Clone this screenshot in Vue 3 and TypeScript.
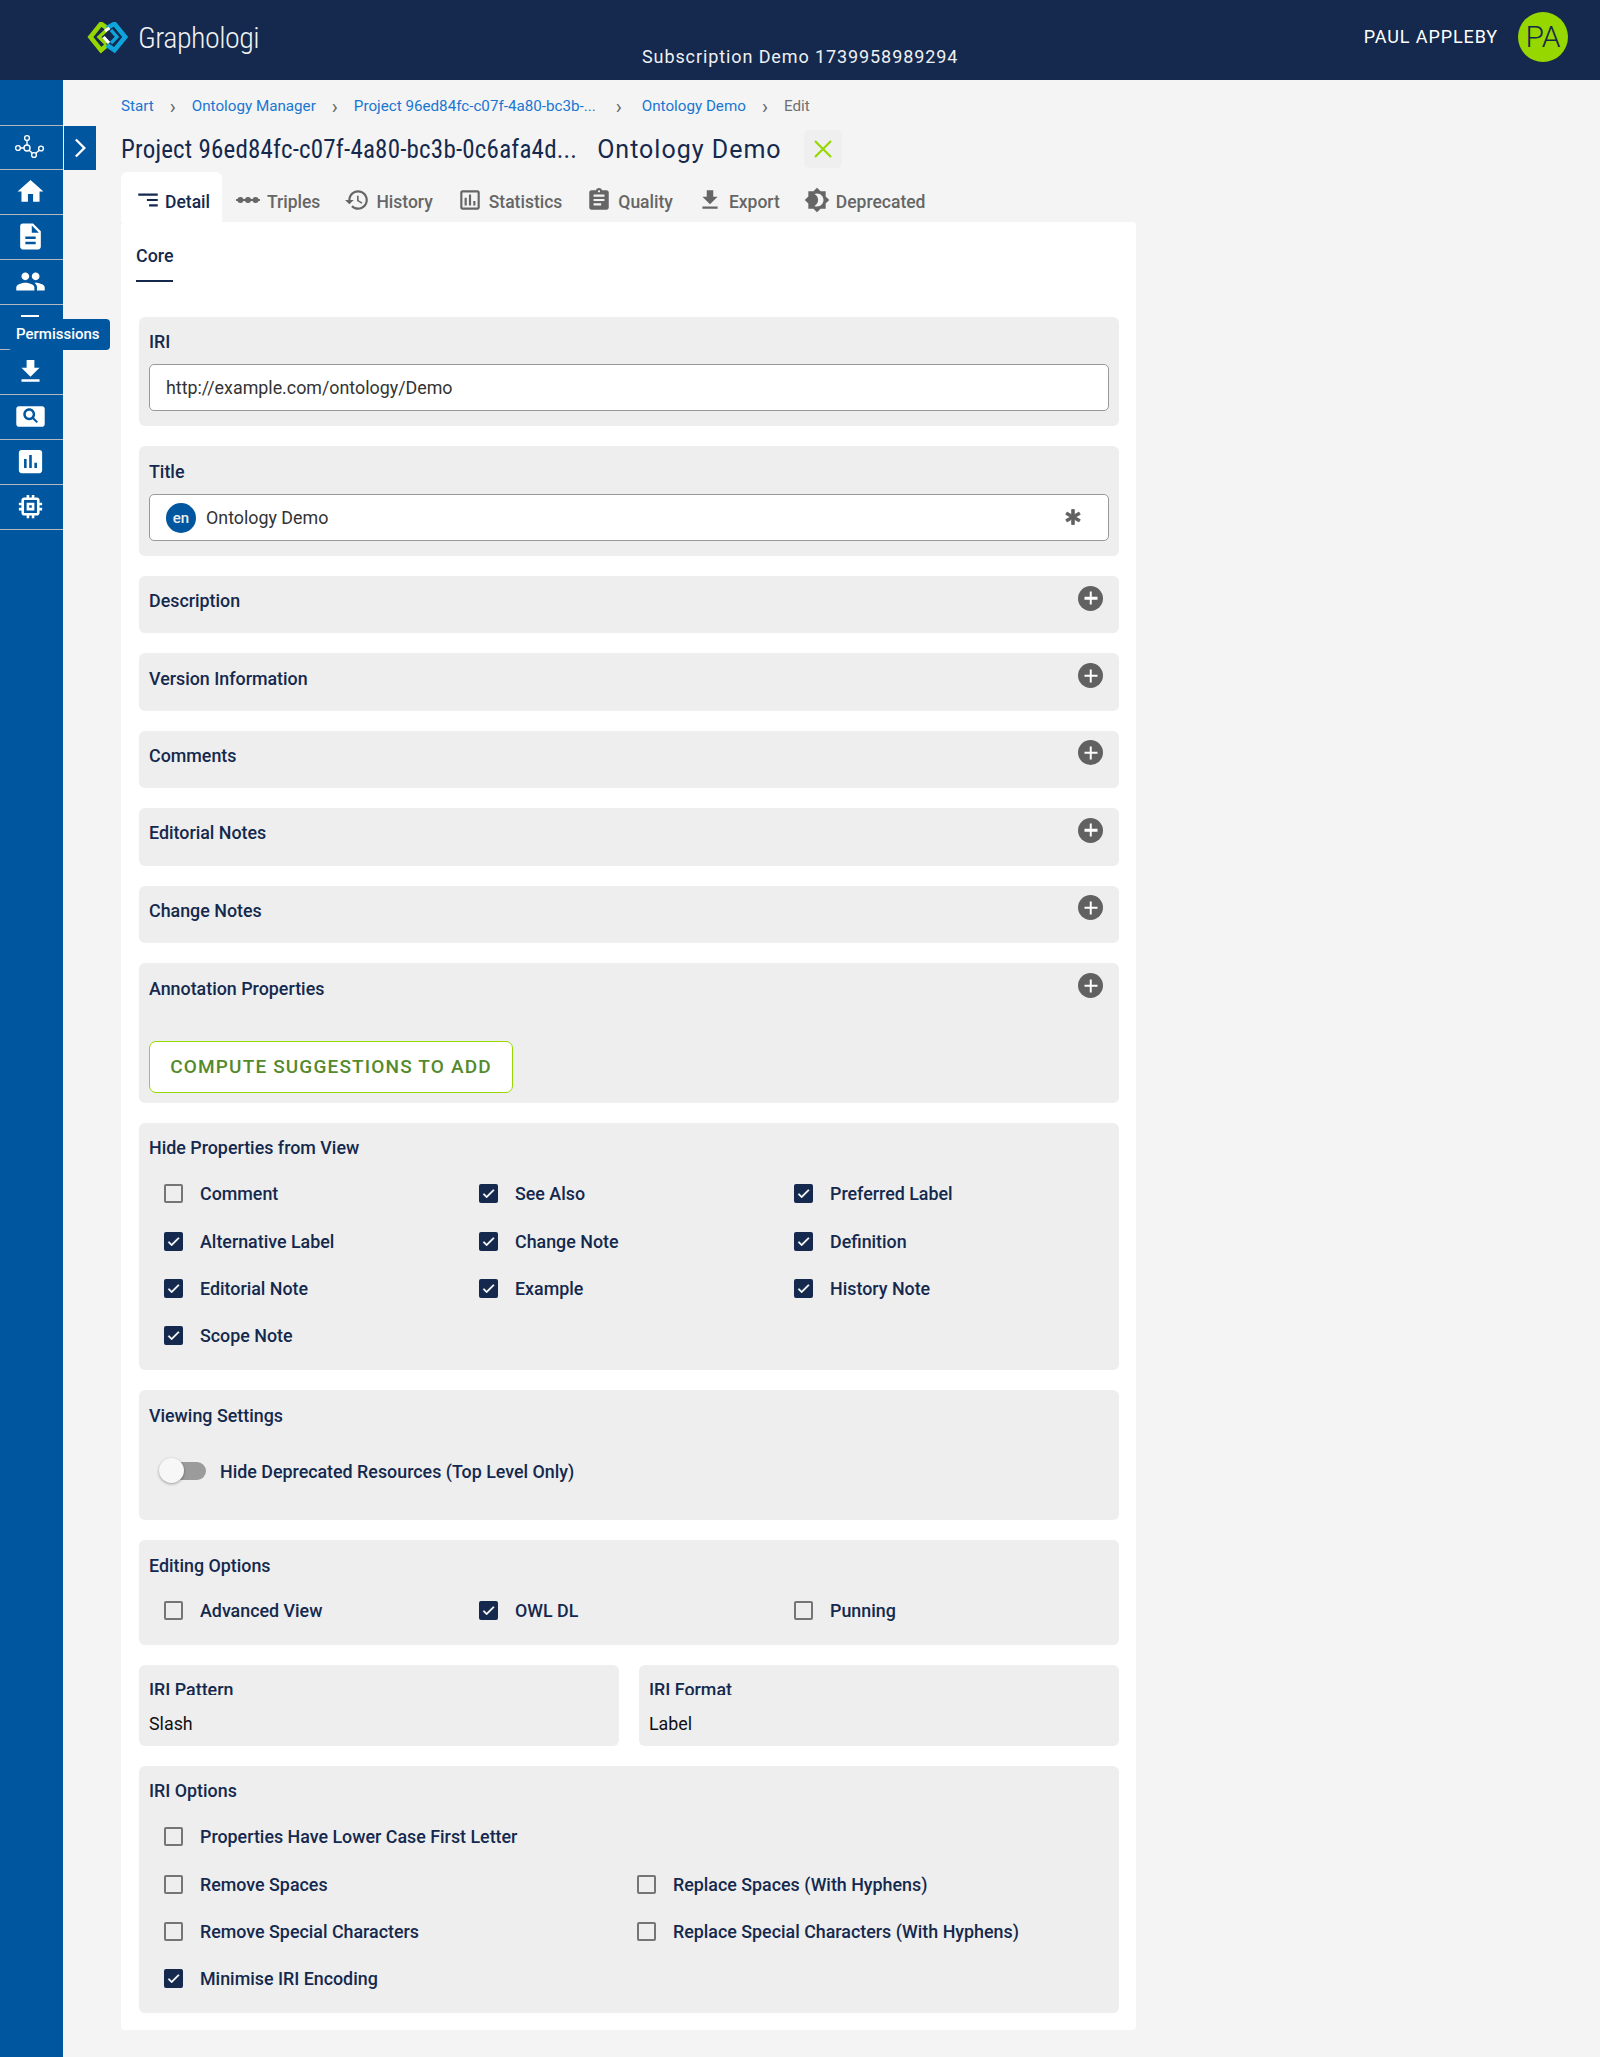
<script setup lang="ts">
const ICONS: Record<string, string> = {
  home: 'M10 20v-6h4v6h5v-8h3L12 3 2 12h3v8z',
  doc: 'M14 2H6c-1.1 0-1.99.9-1.99 2L4 20c0 1.1.89 2 1.99 2H18c1.1 0 2-.9 2-2V8l-6-6zm2 16H8v-2h8v2zm0-4H8v-2h8v2zm-3-5V3.5L18.5 9H13z',
  people: 'M16 11c1.66 0 2.99-1.34 2.99-3S17.66 5 16 5c-1.66 0-3 1.34-3 3s1.34 3 3 3zm-8 0c1.66 0 2.99-1.34 2.99-3S9.66 5 8 5C6.34 5 5 6.34 5 8s1.34 3 3 3zm0 2c-2.33 0-7 1.17-7 3.5V19h14v-2.5c0-2.33-4.67-3.5-7-3.5zm8 0c-.29 0-.62.02-.97.05 1.16.84 1.97 1.97 1.97 3.45V19h6v-2.5c0-2.33-4.67-3.5-7-3.5z',
  download: 'M19 9h-4V3H9v6H5l7 7 7-7zM5 18v2h14v-2H5z',
  search: 'M21 4H3c-1.1 0-2 .9-2 2v12c0 1.1.9 2 2 2h18c1.1 0 2-.9 2-2V6c0-1.1-.9-2-2-2zm-4.3 13.1-3-3c-.8.5-1.7.8-2.7.8-2.6 0-4.6-2.1-4.6-4.6S8.5 5.7 11 5.7s4.6 2.1 4.6 4.6c0 1-.3 1.9-.8 2.7l3 3-1.1 1.1zM11 7.6c-1.5 0-2.7 1.2-2.7 2.7S9.5 13 11 13s2.7-1.2 2.7-2.7-1.2-2.7-2.7-2.7z',
  chart: 'M19 3H5c-1.1 0-2 .9-2 2v14c0 1.1.9 2 2 2h14c1.1 0 2-.9 2-2V5c0-1.1-.9-2-2-2zM9 17H7v-7h2v7zm4 0h-2V7h2v10zm4 0h-2v-4h2v4z',
  chip: 'M15 9H9v6h6V9zm-2 4h-2v-2h2v2zm8-2V9h-2V7c0-1.1-.9-2-2-2h-2V3h-2v2h-2V3H9v2H7c-1.1 0-2 .9-2 2v2H3v2h2v2H3v2h2v2c0 1.1.9 2 2 2h2v2h2v-2h2v2h2v-2h2c1.1 0 2-.9 2-2v-2h2v-2h-2v-2h2zm-4 6H7V7h10v10z',
  history: 'M13 3c-4.97 0-9 4.03-9 9H1l3.89 3.89.07.14L9 12H6c0-3.87 3.13-7 7-7s7 3.13 7 7-3.13 7-7 7c-1.93 0-3.68-.79-4.94-2.06l-1.42 1.42C8.27 19.99 10.51 21 13 21c4.97 0 9-4.03 9-9s-4.03-9-9-9zm-1 5v5l4.28 2.54.72-1.21-3.5-2.08V8H12z',
  poll: 'M19 3H5c-1.1 0-2 .9-2 2v14c0 1.1.9 2 2 2h14c1.1 0 2-.9 2-2V5c0-1.1-.9-2-2-2zm0 16H5V5h14v14zM7 10h2v7H7zm4-3h2v10h-2zm4 6h2v4h-2z',
  quality: 'M19 3h-4.18C14.4 1.84 13.3 1 12 1c-1.3 0-2.4.84-2.82 2H5c-1.1 0-2 .9-2 2v14c0 1.1.9 2 2 2h14c1.1 0 2-.9 2-2V5c0-1.1-.9-2-2-2zm-7 0c.55 0 1 .45 1 1s-.45 1-1 1-1-.45-1-1 .45-1 1-1zm2 14H7v-2h7v2zm3-4H7v-2h10v2zm0-4H7V7h10v2z',
  deprecated: 'M20 8.69V4h-4.69L12 .69 8.69 4H4v4.69L.69 12 4 15.31V20h4.69L12 23.31 15.31 20H20v-4.69L23.31 12 20 8.69zM12 18c-.89 0-1.74-.2-2.5-.55C11.56 16.5 13 14.42 13 12s-1.44-4.5-3.5-5.45C10.26 6.2 11.11 6 12 6c3.31 0 6 2.69 6 6s-2.69 6-6 6z',
  sort: 'M3 6h18v2H3zM11 11h10v2H11zM13 16h8v2h-8z',
  triples: 'M1 11h22v2H1zM5 9.2a2.8 2.8 0 1 1 0 5.6 2.8 2.8 0 0 1 0-5.6zM12 9.2a2.8 2.8 0 1 1 0 5.6 2.8 2.8 0 0 1 0-5.6zM19 9.2a2.8 2.8 0 1 1 0 5.6 2.8 2.8 0 0 1 0-5.6z',
}

const navIcons = ['graph', 'home', 'doc', 'people', 'perm', 'download', 'search', 'chart', 'chip']

const crumbs = [
  { text: 'Start', long: false },
  { text: 'Ontology Manager', long: false },
  { text: 'Project 96ed84fc-c07f-4a80-bc3b-...', long: true },
  { text: 'Ontology Demo', long: false },
]

const tabs = [
  { label: 'Detail', icon: 'sort', active: true },
  { label: 'Triples', icon: 'triples' },
  { label: 'History', icon: 'history' },
  { label: 'Statistics', icon: 'poll' },
  { label: 'Quality', icon: 'quality' },
  { label: 'Export', icon: 'download' },
  { label: 'Deprecated', icon: 'deprecated' },
]

const collapsed = ['Description', 'Version Information', 'Comments', 'Editorial Notes', 'Change Notes']

const hideProps = [
  { label: 'Comment', on: false },
  { label: 'See Also', on: true },
  { label: 'Preferred Label', on: true },
  { label: 'Alternative Label', on: true },
  { label: 'Change Note', on: true },
  { label: 'Definition', on: true },
  { label: 'Editorial Note', on: true },
  { label: 'Example', on: true },
  { label: 'History Note', on: true },
  { label: 'Scope Note', on: true },
]

const editing = [
  { label: 'Advanced View', on: false },
  { label: 'OWL DL', on: true },
  { label: 'Punning', on: false },
]

const iriOptions = [
  { label: 'Remove Spaces', on: false },
  { label: 'Replace Spaces (With Hyphens)', on: false },
  { label: 'Remove Special Characters', on: false },
  { label: 'Replace Special Characters (With Hyphens)', on: false },
  { label: 'Minimise IRI Encoding', on: true },
]
</script>

<template>
  <div class="page">
    <header class="topbar">
      <div class="brand">
        <svg class="logo" viewBox="0 0 42 32" width="42" height="32">
          <path d="M20 6 14 1.8 3.4 15 14 28.2 20 23" fill="none" stroke="#97d700" stroke-width="4.6" />
          <path d="M20 6 27.5 1.8 38.2 15 27.5 28.2 20 23" fill="none" stroke="#0ea5dc" stroke-width="4.6" />
          <path d="M19 8.5 12 15 19 22" fill="none" stroke="#97d700" stroke-width="3.4" />
          <path d="M24 8 30 15 24 21" fill="none" stroke="#0ea5dc" stroke-width="3.4" />
          <path d="M16.5 15 22 21M18 9 22.5 6" fill="none" stroke="#fff" stroke-width="3.2" />
        </svg>
        <span class="brand-name">Graphologi</span>
      </div>
      <div class="subscription">Subscription Demo 1739958989294</div>
      <div class="user">
        <span class="user-name">PAUL APPLEBY</span>
        <span class="avatar">PA</span>
      </div>
    </header>

    <div class="body">
      <nav class="sidebar">
        <div v-for="n in navIcons" :key="n" class="nav-item">
          <svg v-if="n === 'graph'" viewBox="0 0 32 28" width="32" height="28" fill="none" stroke="#fff" stroke-width="1.4">
            <circle cx="13" cy="5" r="2.4" />
            <circle cx="13" cy="15" r="3" />
            <circle cx="4" cy="15" r="2.4" />
            <circle cx="20" cy="22" r="2.4" />
            <circle cx="27" cy="15.5" r="2.4" />
            <path d="M13 7.4V12M6.4 15H10M15.2 17.2 18.3 20.3M21.8 20.3 25.2 17.2" />
          </svg>
          <span v-else-if="n === 'perm'" class="perm-bar"></span>
          <svg v-else viewBox="0 0 24 24" width="31" height="31" fill="#fff"><path :d="ICONS[n]" /></svg>
        </div>
        <div class="tooltip">Permissions</div>
        <div class="expand">
          <svg viewBox="0 0 24 24" width="28" height="28" fill="#fff"><path d="M8.6 5.4 10 4l8 8-8 8-1.4-1.4 6.6-6.6z" /></svg>
        </div>
      </nav>

      <main class="main">
        <div class="crumbs">
          <template v-for="c in crumbs" :key="c.text">
            <a class="crumb">{{ c.text }}</a>
            <span class="sep" :class="{ wide: c.long }">&#8250;</span>
          </template>
          <span class="crumb-last">Edit</span>
        </div>

        <div class="title-row">
          <h1 class="title t1">Project 96ed84fc-c07f-4a80-bc3b-0c6afa4d...</h1>
          <h1 class="title t2">Ontology Demo</h1>
          <span class="close">
            <svg viewBox="0 0 24 24" width="24" height="24" fill="none" stroke="#97d700" stroke-width="2.2"><path d="M4 4 20 20M20 4 4 20" /></svg>
          </span>
        </div>

        <div class="tabs">
          <div v-for="t in tabs" :key="t.label" class="tab" :class="{ active: t.active }">
            <svg viewBox="0 0 24 24" width="26" height="26" fill="currentColor"><path :d="ICONS[t.icon]" /></svg>
            <span class="tab-text">{{ t.label }}</span>
          </div>
        </div>

        <section class="card">
          <div class="subtabs"><span class="subtab">Core</span></div>

          <div class="panel field-panel">
            <div class="label">IRI</div>
            <div class="input">http://example.com/ontology/Demo</div>
          </div>

          <div class="panel field-panel tall">
            <div class="label">Title</div>
            <div class="input">
              <span class="lang">en</span>
              <span class="input-text">Ontology Demo</span>
              <svg class="asterisk" viewBox="0 0 24 24" width="20" height="20" fill="#616161" stroke="#616161" stroke-width="1"><path d="M10.4 3h3.2v6.3l5.5-3.2 1.6 2.8-5.5 3.1 5.5 3.1-1.6 2.8-5.5-3.2V21h-3.2v-6.3l-5.5 3.2-1.6-2.8 5.5-3.1-5.5-3.1 1.6-2.8 5.5 3.2z" /></svg>
            </div>
          </div>

          <div v-for="c in collapsed" :key="c" class="panel collapsed">
            <div class="label">{{ c }}</div>
            <span class="plus"></span>
          </div>

          <div class="panel annotation">
            <div class="head-row">
              <div class="label">Annotation Properties</div>
              <span class="plus"></span>
            </div>
            <button class="suggest" type="button">COMPUTE SUGGESTIONS TO ADD</button>
          </div>

          <div class="panel checks-panel">
            <div class="label">Hide Properties from View</div>
            <div class="grid3">
              <label v-for="p in hideProps" :key="p.label" class="check">
                <span class="box" :class="{ on: p.on }">
                  <svg v-if="p.on" viewBox="0 0 24 24" width="17" height="17" fill="#fff" stroke="#fff" stroke-width="0.9"><path d="M9 16.17 4.83 12l-1.41 1.41L9 19 21 7l-1.41-1.41z" /></svg>
                </span>
                <span>{{ p.label }}</span>
              </label>
            </div>
          </div>

          <div class="panel viewing">
            <div class="label">Viewing Settings</div>
            <div class="toggle-row">
              <span class="toggle"><span class="knob"></span></span>
              <span class="check-text">Hide Deprecated Resources (Top Level Only)</span>
            </div>
          </div>

          <div class="panel editing">
            <div class="label">Editing Options</div>
            <div class="grid3">
              <label v-for="p in editing" :key="p.label" class="check">
                <span class="box" :class="{ on: p.on }">
                  <svg v-if="p.on" viewBox="0 0 24 24" width="17" height="17" fill="#fff" stroke="#fff" stroke-width="0.9"><path d="M9 16.17 4.83 12l-1.41 1.41L9 19 21 7l-1.41-1.41z" /></svg>
                </span>
                <span>{{ p.label }}</span>
              </label>
            </div>
          </div>

          <div class="two">
            <div class="panel mini">
              <div class="clipped">IRI Pattern</div>
              <div class="value">Slash</div>
            </div>
            <div class="panel mini">
              <div class="clipped">IRI Format</div>
              <div class="value">Label</div>
            </div>
          </div>

          <div class="panel options">
            <div class="label">IRI Options</div>
            <div class="grid2">
              <label class="check wide">
                <span class="box"></span>
                <span>Properties Have Lower Case First Letter</span>
              </label>
              <label v-for="p in iriOptions" :key="p.label" class="check">
                <span class="box" :class="{ on: p.on }">
                  <svg v-if="p.on" viewBox="0 0 24 24" width="17" height="17" fill="#fff" stroke="#fff" stroke-width="0.9"><path d="M9 16.17 4.83 12l-1.41 1.41L9 19 21 7l-1.41-1.41z" /></svg>
                </span>
                <span>{{ p.label }}</span>
              </label>
            </div>
          </div>
        </section>
      </main>
    </div>
  </div>
</template>

<style>
html, body { margin: 0; background: #f4f4f4; }
</style>

<style scoped>
.page { width: 1600px; height: 2057px; display: flex; flex-direction: column; background: #f4f4f4; font-family: Roboto, "Liberation Sans", sans-serif; color: #14294d; overflow: hidden; }
.topbar { height: 80px; flex: none; background: #14294d; display: flex; position: relative; color: #fff; }
.brand { display: flex; align-items: flex-start; padding: 22px 0 0 87px; gap: 9px; }
.brand-name { font-size: 30px; line-height: 32px; font-weight: 300; font-stretch: 75%; letter-spacing: -0.5px; color: #f1f1f1; }
.subscription { position: absolute; left: 642px; top: 46px; font-size: 18px; line-height: 22px; letter-spacing: 0.9px; color: #eef0f3; }
.user { margin-left: auto; display: flex; align-items: center; padding: 0 32px 7px 0; gap: 20px; height: 73px; }
.user-name { font-size: 18px; letter-spacing: 0.9px; }
.avatar { width: 50px; height: 50px; border-radius: 50%; background: #97d700; color: #14294d; display: flex; align-items: center; justify-content: center; font-size: 30px; font-weight: 300; }

.body { flex: 1; display: flex; min-height: 0; }
.sidebar { width: 63px; flex: none; background: #00579f; padding-top: 45px; position: relative; box-sizing: border-box; }
.nav-item { height: 45px; border-bottom: 1px solid #b4b9bf; box-sizing: border-box; display: flex; align-items: center; justify-content: center; padding: 0 3px 2px 0; }
.nav-item:first-child { border-top: 1px solid #b4b9bf; height: 45px; }
.perm-bar { width: 18px; height: 2px; background: #fff; margin-bottom: 20px; }
.tooltip { position: absolute; left: 8px; top: 239px; width: 102px; height: 31px; box-sizing: border-box; background: #00579f; border-radius: 4px; color: #fff; font-size: 15px; font-weight: 500; line-height: 31px; padding-left: 8px; }
.expand { position: absolute; left: 64px; top: 46px; width: 32px; height: 44px; background: #00579f; display: flex; align-items: center; justify-content: center; padding-right: 2px; box-sizing: border-box; }

.main { padding-left: 58px; flex: 1; }
.crumbs { display: flex; align-items: center; height: 20px; margin-top: 16px; font-size: 15.2px; color: #666; }
.crumb { color: #1976d2; }
.sep { width: 38px; text-align: center; font-size: 20px; line-height: 20px; color: #666; padding-top: 2px; }
.sep.wide { width: 46px; }
.crumb-last { color: #707070; }
.title-row { display: flex; align-items: center; height: 38px; margin-top: 14px; }
.title { margin: 0; font-size: 25px; font-weight: 400; font-stretch: 75%; letter-spacing: 0.2px; color: #14294d; white-space: nowrap; }
.t2 { margin-left: 20px; font-stretch: 100%; letter-spacing: 1px; }
.close { width: 38px; height: 38px; margin-left: 22px; background: #efefef; border-radius: 5px; display: flex; align-items: center; justify-content: center; }
.tabs { display: flex; height: 50px; margin-top: 4px; }
.tab { display: flex; align-items: center; gap: 6px; padding: 5px 12px 0; color: #666; font-size: 17.5px; font-weight: 500; box-sizing: border-box; }
.tab:nth-child(2) { padding-left: 13px; }
.tab-text { padding-top: 4px; }
.tab.active { background: #fff; color: #14294d; border-radius: 6px 6px 0 0; padding: 5px 12px 0 14px; gap: 4px; }
.card { width: 1015px; height: 1808px; background: #fff; box-sizing: border-box; padding: 0 17px 0 18px; border-radius: 4px; }
.subtabs { height: 95px; padding-top: 21px; box-sizing: border-box; }
.subtab { display: inline-block; margin-left: -3px; padding-bottom: 11px; border-bottom: 2px solid #14294d; font-size: 17.85px; font-weight: 500; line-height: 26px; }
.panel { background: #eee; border-radius: 6px; margin-bottom: 20px; padding: 0 10px; box-sizing: border-box; }
.label { font-size: 17.85px; font-weight: 500; line-height: 24px; color: #14294d; }
.field-panel { height: 109px; padding-top: 13px; }
.field-panel.tall { height: 110px; padding-top: 14px; }
.field-panel .label { margin-bottom: 10px; }
.input { height: 47px; background: #fff; border: 1px solid #999; border-radius: 5px; box-sizing: border-box; display: flex; align-items: center; padding: 0 16px; font-size: 17.85px; color: #333; }
.lang { width: 30px; height: 30px; border-radius: 50%; background: #00579f; color: #eee; display: flex; align-items: center; justify-content: center; font-size: 15px; font-weight: 500; margin-right: 10px; }
.input-text { flex: 1; }
.asterisk { margin: -2px 9px 0 0; }
.collapsed { height: 57.4px; display: flex; align-items: center; justify-content: space-between; padding: 0 16px 7px 10px; }
.plus { width: 25px; height: 25px; border-radius: 50%; background: #616161; position: relative; margin-top: -6px; flex: none; }
.plus::before, .plus::after { content: ""; position: absolute; background: #fff; left: 50%; top: 50%; transform: translate(-50%, -50%); }
.plus::before { width: 13px; height: 2.5px; }
.plus::after { width: 2.5px; height: 13px; }
.annotation { height: 140px; padding-top: 12px; }
.head-row { display: flex; align-items: center; justify-content: space-between; padding-right: 6px; height: 28px; }
.suggest { display: block; margin-top: 38px; width: 364px; height: 52px; background: #fff; border: 1.5px solid #97d700; border-radius: 7px; color: #548a2c; font: 500 19px Roboto, sans-serif; letter-spacing: 1.15px; padding: 0; }
.checks-panel { height: 247px; padding-top: 13px; }
.grid3 { display: grid; grid-template-columns: repeat(3, 315px); grid-auto-rows: 47.4px; padding: 10px 0 0 15px; }
.grid2 { display: grid; grid-template-columns: repeat(2, 473px); grid-auto-rows: 47.4px; padding: 10px 0 0 15px; }
.wide { grid-column: 1 / 3; }
.check { display: flex; align-items: center; font-size: 17.85px; font-weight: 500; color: #14294d; }
.check-text { font-size: 17.85px; font-weight: 500; }
.box { width: 19px; height: 19px; box-sizing: border-box; border: 2px solid #757575; border-radius: 2px; margin-right: 17px; flex: none; display: flex; align-items: center; justify-content: center; }
.box.on { background: #14294d; border-color: #14294d; }
.viewing { height: 130px; padding-top: 14px; }
.toggle-row { display: flex; align-items: center; margin-top: 33px; padding-left: 10px; gap: 14px; }
.toggle { width: 46px; height: 18px; border-radius: 9px; background: #9b9b9b; position: relative; flex: none; margin-left: 1px; }
.knob { position: absolute; left: -1px; top: -4px; width: 25px; height: 25px; border-radius: 50%; background: #f7f7f7; box-shadow: 0 1px 3px rgba(0,0,0,.35); }
.editing { height: 105px; padding-top: 14px; }
.editing .grid3 { padding-top: 9px; }
.two { display: grid; grid-template-columns: 480px 480px; gap: 20px; }
.mini { height: 81px; padding-top: 13px; }
.clipped { font-size: 17.85px; font-weight: 500; line-height: 24px; height: 17px; overflow: hidden; }
.value { font-size: 17.85px; color: #111; margin-top: 17px; line-height: 24px; }
.options { height: 247px; padding-top: 13px; }
</style>
